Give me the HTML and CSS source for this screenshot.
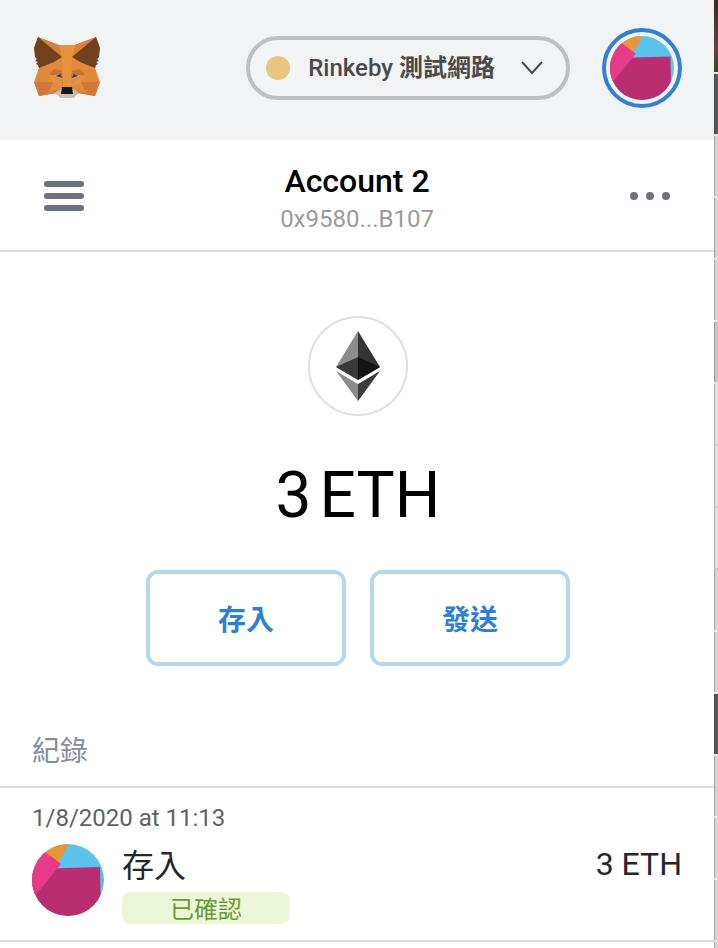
FILE: index.html
```html
<!DOCTYPE html>
<html lang="zh-Hant">
<head>
<meta charset="utf-8">
<meta name="viewport" content="width=device-width, initial-scale=1">
<title>MetaMask</title>
<link rel="stylesheet" href="styles.css">
</head>
<body>
<div class="popup">
  <header class="topbar">
    <svg class="fox" viewBox="0 0 66 62" aria-label="MetaMask" role="img">
      <path fill="#e2893b" d="M4 0 25 8H41L62 0 66 11 61 31 66 45 61 59 44 56 39 61H27L22 56 5 59 0 45 5 31 0 11Z"/>
      <path fill="#d9803a" d="M4 0 25 8 28 20ZM62 0 41 8 38 20Z"/>
      <path fill="#e6923f" d="M25 8H41L38 20 37 50H29L28 20Z"/>
      <path fill="#d67c3a" d="M0 45H19L22 56 5 59ZM66 45H47L44 56 61 59Z"/>
      <path fill="#c97238" d="M3 45H19L14 55 5 59ZM63 45H47L52 55 61 59Z" opacity=".5"/>
      <path fill="#e08a3c" d="M19 45 28 51 14 56ZM47 45 38 51 52 56Z"/>
      <path fill="#cc7034" d="M15 38 20 32 28 34 29 41 24 38ZM51 38 46 32 38 34 37 41 42 38Z"/>
      <path fill="#e6923f" d="M15 38 24 42 28 50 19 45ZM51 38 42 42 38 50 47 45Z"/>
      <path fill="#70411f" d="M4 0 28 20 20 25 5 31 4 28 2 27 4 25 1 24 3 22 1 20 0 11ZM62 0 38 20 46 25 61 31 62 28 64 27 62 25 65 24 63 22 65 20 66 11Z"/>
      <path fill="#b9b5ad" d="M20 39 25 37 28 42ZM46 39 41 37 38 42Z"/>
      <path fill="#273a4f" d="M22 39 26 37 28 41ZM44 39 40 37 38 41Z"/>
      <path fill="#cdbbae" d="M21 56 28 51H38L45 56 39 61H27Z"/>
      <path fill="#171717" d="M28 50H38L39 57H27Z"/>
    </svg>
    <button class="network" type="button">
      <span class="dot"></span>
      <span class="network-name">Rinkeby <b>測試網路</b></span>
      <svg class="chevron" viewBox="0 0 22 14" aria-hidden="true"><path d="M1 1 11 12 21 1"/></svg>
    </button>
    <button class="account-button" type="button" aria-label="Account 2">
      <svg class="avatar" viewBox="0 0 72 72" aria-hidden="true"><use href="#identicon"/></svg>
    </button>
  </header>

  <section class="account">
    <button class="icon-button" type="button" aria-label="Menu">
      <svg class="menu-icon" viewBox="0 0 40 30" aria-hidden="true"><path d="M3 3H37M3 15H37M3 27H37"/></svg>
    </button>
    <div class="account-info">
      <h1 class="account-name">Account 2</h1>
      <div class="address">0x9580...B107</div>
    </div>
    <button class="icon-button" type="button" aria-label="Options">
      <svg class="more-icon" viewBox="0 0 40 8" aria-hidden="true"><circle cx="4" cy="4" r="4"/><circle cx="20" cy="4" r="4"/><circle cx="36" cy="4" r="4"/></svg>
    </button>
  </section>

  <main>
    <section class="overview">
      <div class="token">
        <svg class="eth" viewBox="0 0 44 70" aria-hidden="true">
          <path fill="#8c8c8c" d="M22 0V49L0 36Z"/>
          <path fill="#343434" d="M22 0V49L44 36Z"/>
          <path fill="#393939" d="M22 26V49L0 36Z"/>
          <path fill="#141414" d="M22 26V49L44 36Z"/>
          <path fill="#8c8c8c" d="M0 40 22 53V70Z"/>
          <path fill="#3c3c3b" d="M44 40 22 53V70Z"/>
        </svg>
      </div>
      <div class="balance"><span>3</span><span>ETH</span></div>
      <div class="actions">
        <button class="action" type="button">存入</button>
        <button class="action" type="button">發送</button>
      </div>
    </section>

    <section class="history">
      <h2 class="history-title">紀錄</h2>
      <article class="transaction">
        <div class="date">1/8/2020 at 11:13</div>
        <div class="transaction-row">
          <svg class="identicon" viewBox="0 0 72 72" aria-hidden="true">
            <defs><clipPath id="disc"><circle cx="36" cy="36" r="36"/></clipPath></defs>
            <g id="identicon" clip-path="url(#disc)">
              <path fill="#5bc3ee" d="M0 0H72V72H0Z"/>
              <path fill="#e99635" d="M0 0H37L24 22H0Z"/>
              <path fill="#b82e70" d="M0 25 68 23 69 72H0Z"/>
              <path fill="#e83a8a" d="M8 4 29 20 2 53-14 40Z"/>
            </g>
          </svg>
          <div class="transaction-info">
            <div class="transaction-name">存入</div>
            <div class="status">已確認</div>
          </div>
          <div class="amount">3 ETH</div>
        </div>
      </article>
    </section>
  </main>
</div>
<div class="backdrop" aria-hidden="true">
  <i class="row photo"></i><i class="row dark"></i><i class="row"></i><i class="row"></i><i class="row"></i>
  <i class="row mid"></i><i class="row light"></i><i class="row light"></i><i class="row light"></i><i class="row"></i><i class="row"></i>
  <i class="row dark"></i><i class="row"></i><i class="row"></i><i class="row"></i><i class="row"></i>
</div>
</body>
</html>
```
FILE: styles.css
```css
* { box-sizing: border-box; }

body {
  margin: 0;
  display: grid;
  grid-template-columns: minmax(0, 1fr) 4px;
  height: 100vh;
  overflow: hidden;
  background: #fff;
  color: #000;
  font-family: Roboto, "Noto Sans CJK TC", sans-serif;
}

button {
  padding: 0;
  border: 0;
  background: none;
  font: inherit;
  cursor: pointer;
}

h1, h2 { margin: 0; }
svg { display: block; }

.popup { min-width: 0; }

.topbar {
  display: flex;
  align-items: center;
  height: 140px;
  padding: 0 32px 4px 34px;
  background: #f1f3f5;
}

.fox {
  width: 66px;
  height: 62px;
}

.network {
  display: flex;
  align-items: center;
  height: 64px;
  margin-left: auto;
  padding: 0 23px 0 16px;
  border: 4px solid #bbc0c5;
  border-radius: 32px;
  color: #4a4a4a;
  font-size: 24px;
  font-weight: 500;
  line-height: 32px;
}

.dot {
  width: 24px;
  height: 24px;
  border-radius: 50%;
  background: #e8c681;
}

.network-name { margin: 0 26px 0 18px; }

.chevron {
  width: 22px;
  height: 14px;
  fill: none;
  stroke: #4a4a4a;
  stroke-width: 2;
}

.account-button {
  margin-left: 32px;
  padding: 4px;
  border: 4px solid #3280d4;
  border-radius: 50%;
}

.avatar {
  width: 64px;
  height: 64px;
}

.account {
  display: flex;
  align-items: center;
  justify-content: space-between;
  height: 112px;
  padding: 2px 44px 0;
  border-bottom: 2px solid #d8d9de;
}

.account-info {
  padding-top: 6px;
  text-align: center;
}

.account-name {
  font-size: 32px;
  font-weight: 500;
  line-height: 40px;
}

.address {
  color: #9b9b9b;
  font-size: 24px;
  line-height: 36px;
}

.menu-icon {
  width: 40px;
  height: 30px;
  stroke: #6a737d;
  stroke-width: 6;
  stroke-linecap: round;
}

.more-icon {
  width: 40px;
  height: 8px;
  fill: #6a737d;
}

.overview {
  display: flex;
  flex-direction: column;
  align-items: center;
  padding: 64px 32px 56px 34px;
}

.token {
  display: grid;
  place-items: center;
  width: 100px;
  height: 100px;
  border: 2px solid #dedede;
  border-radius: 50%;
}

.eth {
  width: 44px;
  height: 70px;
}

.balance {
  display: flex;
  gap: 8px;
  margin: 40px 0 34px;
  font-size: 64px;
  font-weight: 400;
  line-height: 80px;
}

.actions {
  display: flex;
  gap: 24px;
}

.action {
  width: 200px;
  height: 96px;
  border: 4px solid #b7d7f0;
  border-radius: 12px;
  color: #2f7fd4;
  font-size: 28px;
  font-weight: 700;
}

.history-title {
  padding: 10px 32px 14px;
  border-bottom: 2px solid #d8d9de;
  color: #868e99;
  font-size: 28px;
  font-weight: 400;
  line-height: 40px;
}

.transaction {
  padding: 16px 32px;
  border-bottom: 2px solid #d8d9de;
}

.date {
  color: #5f6267;
  font-size: 24px;
  line-height: 28px;
}

.transaction-row {
  display: flex;
  align-items: flex-start;
  color: #24272a;
  font-size: 32px;
  line-height: 40px;
}

.identicon {
  width: 72px;
  height: 72px;
  margin-top: 12px;
}

.transaction-info {
  margin: 14px 0 0 18px;
}

.status {
  width: 168px;
  height: 32px;
  margin-top: 6px;
  border-radius: 8px;
  background: #ecf7da;
  color: #6a9b30;
  font-size: 24px;
  line-height: 36px;
  text-align: center;
}

.amount {
  margin: 12px 0 0 auto;
}

.backdrop {
  display: flex;
  flex-direction: column;
  overflow: hidden;
  background: #e8e8e8;
}

.row {
  flex: 0 0 62px;
  border-bottom: 2px solid #e8e8e8;
  background: linear-gradient(90deg, #a6a6a6 25%, #cecece 25%, #dcdcdc);
}

.photo {
  flex-basis: 74px;
  background: linear-gradient(#3a2925, #65443c 65%, #344524);
}

.dark { background: linear-gradient(90deg, #4b4b4b, #606060); }
.mid {
  border-bottom-color: #e2e2e2;
  background: linear-gradient(90deg, #9c9c9c 25%, #bfbfbf 25%, #cdcdcd);
}
.light {
  border-bottom-color: #cacaca;
  background: linear-gradient(90deg, #b1b1b1 25%, #dbdbdb 25%, #e9e9e9);
}
```
